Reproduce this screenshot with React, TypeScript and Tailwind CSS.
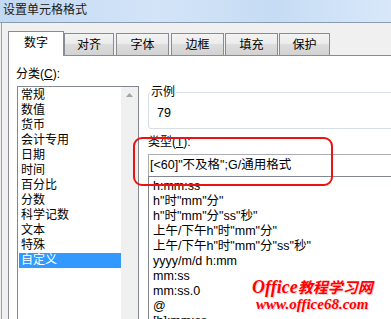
export default function App() {
  const cats = ['常规', '数值', '货币', '会计专用', '日期', '时间', '百分比', '分数', '科学记数', '文本', '特殊', '自定义'];
  const fmts = [
    'h:mm:ss',
    'h"时"mm"分"',
    'h"时"mm"分"ss"秒"',
    '上午/下午h"时"mm"分"',
    '上午/下午h"时"mm"分"ss"秒"',
    'yyyy/m/d h:mm',
    'mm:ss',
    'mm:ss.0',
    '@',
    '[h]:mm:ss',
  ];
  const tabs: { t: string; w: string; ml: string }[] = [
    { t: '对齐', w: 'w-[50px]', ml: 'ml-[0px]' },
    { t: '字体', w: 'w-[53px]', ml: 'ml-[2px]' },
    { t: '边框', w: 'w-[53px]', ml: 'ml-[2px]' },
    { t: '填充', w: 'w-[53px]', ml: 'ml-[1px]' },
    { t: '保护', w: 'w-[51px]', ml: 'ml-[1px]' },
  ];
  const font = "font-['Liberation_Sans','Noto_Sans_CJK_SC',sans-serif]";
  return (
    <div className={`relative flex h-[319px] w-[391px] flex-col overflow-hidden bg-[#f0f0f0] text-[12px] text-black ${font}`}>
      {/* title bar */}
      <div className="h-[23px] shrink-0 border-b border-[#8a9cb0] bg-[linear-gradient(90deg,#c2d9f3_0%,#d3e4f8_40%,#c6dcf4_70%,#d8e8fa_100%)] pl-[3px] text-[12px] leading-[20px] text-[#1a1a1a]">
        设置单元格格式
      </div>
      {/* body */}
      <div className="flex flex-1 pl-[1px]">
        <div className="flex flex-1 flex-col border-l border-[#a0a0a0] pl-[6px] pt-[8px]">
          {/* tabs */}
          <div className="flex h-[24px] shrink-0 items-end">
            <div className="relative z-10 mb-[-1px] flex h-[25px] w-[56px] items-center justify-center border-l border-r border-t border-[#898c95] bg-white pb-[2px]">
              数字
            </div>
            {tabs.map((tb) => (
              <div
                key={tb.t}
                className={`flex h-[22px] ${tb.w} ${tb.ml} items-center justify-center border-l border-r border-t border-[#898c95] bg-[linear-gradient(#f3f3f3_0%,#ececec_45%,#dddddd_50%,#d2d2d2_100%)]`}
              >
                {tb.t}
              </div>
            ))}
          </div>
          {/* panel */}
          <div className="flex flex-1 border-l border-t border-[#898c95] bg-white pl-[7px]">
            {/* left column */}
            <div className="flex w-[123px] shrink-0 flex-col pt-[11px]">
              <div className="h-[15px] leading-[15px]">
                分类(<span className="underline">C</span>):
              </div>
              <div className="ml-[1px] mt-[4px] flex flex-1 border border-[#828790]">
                <div className="w-[103px] pt-[1px]">
                  {cats.map((c, i) =>
                    i === cats.length - 1 ? (
                      <div key={c} className="ml-[1px] h-[15px] bg-[#3399ff] pl-[2px] leading-[15px] text-white">
                        {c}
                      </div>
                    ) : (
                      <div key={c} className="h-[15px] pl-[3px] leading-[15px]">
                        {c}
                      </div>
                    )
                  )}
                </div>
                <div className="flex w-[17px] justify-center bg-[#f0f0f0] pt-[6px]">
                  <svg width="7" height="4" viewBox="0 0 7 4">
                    <polygon points="3.5,0 7,4 0,4" fill="#a3a3a3" />
                  </svg>
                </div>
              </div>
            </div>
            {/* right column */}
            <div className="ml-[9px] flex w-[300px] shrink-0 flex-col">
              <div className="relative mt-[36px] h-[37px] rounded-[3px] border border-[#d5dfe5] pl-[8px] pt-[13px] text-[12.5px] leading-[15px]">
                <span className="absolute left-[1px] top-[-8px] bg-white px-[1px] text-[12px] leading-[15px]">示例</span>
                79
              </div>
              <div className="mt-[6px] h-[15px] leading-[15px]">
                类型(<span className="underline">T</span>):
              </div>
              <div className="mt-[4px] h-[22px] border-l border-t border-[#abadb3] pl-[1px] text-[12.5px] leading-[21px]">
                [&lt;60]"不及格";G/通用格式
              </div>
              <div className="flex-1 border-l border-t border-[#828790] pl-[4px] pt-[2px] text-[12.5px]">
                {fmts.map((f) => (
                  <div key={f} className="h-[15px] whitespace-nowrap leading-[15px]">
                    {f}
                  </div>
                ))}
              </div>
            </div>
          </div>
        </div>
      </div>
      {/* red highlight */}
      <div className="absolute left-[133px] top-[137px] h-[49px] w-[200px] rounded-[9px] border-2 border-[#ee1111]" />
      {/* watermark */}
      <div className="absolute left-[252px] top-[278px] text-[#ff0000] [text-shadow:1px_1px_0_#ffd0d0]">
        <div className="h-[18px] whitespace-nowrap text-[16px] font-bold italic leading-[18px]">
          <span className="font-['Liberation_Serif',serif] text-[18px]">Office</span>
          <span className="font-['Noto_Sans_CJK_SC',sans-serif] text-[15px]">教程学习网</span>
        </div>
        <div className="ml-[4px] h-[16px] whitespace-nowrap font-['Liberation_Serif',serif] text-[15px] font-bold italic leading-[16px]">
          www.office68.com
        </div>
      </div>
    </div>
  );
}
